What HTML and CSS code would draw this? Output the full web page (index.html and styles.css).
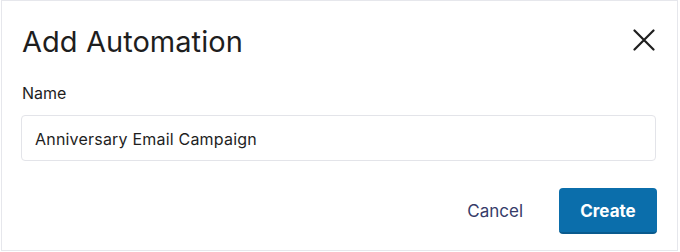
FILE: index.html
```html
<!DOCTYPE html>
<html lang="en">
<head>
<meta charset="utf-8">
<title>Add Automation</title>
<link rel="stylesheet" href="styles.css">
</head>
<body>
<div class="modal">
  <div class="modal-header">
    <h1 class="modal-title">Add Automation</h1>
    <button class="close-btn" aria-label="Close">
      <svg width="22" height="22" viewBox="0 0 22 22" fill="none" stroke="#1e1e1e" stroke-width="2.2" stroke-linecap="round">
        <path d="M1.5 1.5 L20.5 20.5 M20.5 1.5 L1.5 20.5"/>
      </svg>
    </button>
  </div>
  <label class="field-label" for="name">Name</label>
  <input class="field-input" id="name" type="text" value="Anniversary Email Campaign">
  <div class="modal-footer">
    <button class="btn-cancel">Cancel</button>
    <button class="btn-create">Create</button>
  </div>
</div>
</body>
</html>
```

FILE: styles.css
```css
html, body {
  margin: 0;
  padding: 0;
  background: #ffffff;
}

body {
  font-family: Inter, "Noto Sans", "Liberation Sans", sans-serif;
  color: #1e1e1e;
}

.modal {
  box-sizing: border-box;
  width: 677px;
  height: 251px;
  margin-left: 1px;
  border: 1px solid #e6e7ec;
  padding: 0 20px 0 19px;
  display: flex;
  flex-direction: column;
}

.modal-header {
  display: flex;
  justify-content: space-between;
  align-items: flex-start;
  padding-top: 23px;
}

.modal-title {
  margin: 0 0 0 1px;
  font-size: 29px;
  line-height: 36px;
  font-weight: 400;
  color: #1e1e1e;
  letter-spacing: 0.05px;
}

.close-btn {
  margin: 5px 2px 0 0;
  padding: 0;
  border: 0;
  background: none;
  width: 22px;
  height: 22px;
  display: flex;
}

.field-label {
  margin-top: 23px;
  margin-left: 1px;
  font-size: 16px;
  line-height: 20px;
  color: #1e1e1e;
}

.field-input {
  box-sizing: border-box;
  margin-top: 12px;
  width: 635px;
  height: 46px;
  border: 1px solid #e3e4e9;
  border-radius: 4px;
  padding: 13px 13px 11px;
  font-family: inherit;
  font-size: 16px;
  line-height: 20px;
  letter-spacing: 0.2px;
  color: #1e1e1e;
  background: #fff;
  outline: none;
}

.modal-footer {
  margin-top: 27px;
  display: flex;
  justify-content: flex-end;
  align-items: center;
  gap: 18px;
}

.btn-cancel {
  height: 46px;
  padding: 0 18px;
  border: 0;
  background: none;
  font-family: inherit;
  font-size: 17px;
  color: #363b69;
}

.btn-create {
  box-sizing: border-box;
  width: 98px;
  height: 46px;
  border: 0;
  border-bottom: 2px solid #0a5b8e;
  border-radius: 4px;
  background: #0b6eab;
  color: #ffffff;
  font-family: inherit;
  font-size: 17px;
  font-weight: 700;
  padding: 2px 0 0;
}
```
